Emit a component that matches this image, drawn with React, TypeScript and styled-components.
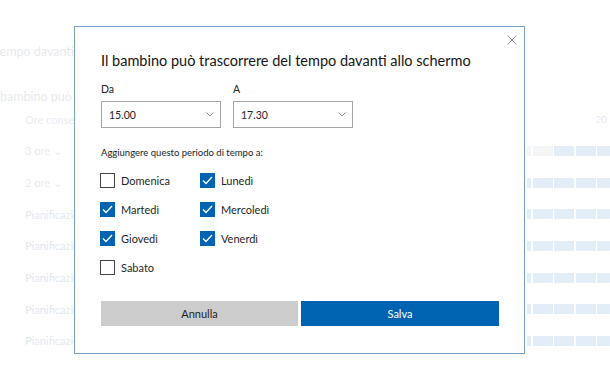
import React from 'react';
import styled, { createGlobalStyle } from 'styled-components';

const GlobalStyle = createGlobalStyle`
  html, body {
    margin: 0;
    padding: 0;
    background: #ffffff;
    font-family: Lato, 'Open Sans', Arial, sans-serif;
  }
  * { box-sizing: border-box; }
`;

const Page = styled.div`
  position: relative;
  width: 610px;
  height: 376px;
  overflow: hidden;
  background: #ffffff;
  padding-top: 42px;
  display: flex;
  flex-direction: column;
`;

const PageHeading = styled.div`
  width: 74px;
  overflow: hidden;
  font-size: 12.5px;
  line-height: 20px;
  color: #e7eaee;
  white-space: nowrap;
  direction: rtl;
  text-align: left;
`;

const PageSubHeading = styled.div`
  width: 74px;
  overflow: hidden;
  margin-top: 25px;
  font-size: 12.5px;
  line-height: 20px;
  color: #e7eaee;
  white-space: nowrap;
`;

const TableHead = styled.div`
  display: flex;
  align-items: center;
  justify-content: space-between;
  height: 20px;
  margin-top: 2px;
  margin-bottom: 6px;
`;

const TableRow = styled.div`
  display: flex;
  align-items: center;
  justify-content: space-between;
  height: 31.7px;
`;

const RowLabel = styled.div<{ tone?: 'plain' | 'link' }>`
  width: 74px;
  overflow: hidden;
  padding-left: 25px;
  font-size: 11px;
  color: ${({ tone }) => (tone === 'link' ? '#e1e8f3' : '#e8ebef')};
  white-space: nowrap;
`;

const HourMark = styled.div`
  width: 83px;
  text-align: right;
  padding-right: 3px;
  font-size: 10px;
  color: #e6e8ec;
`;

const Bars = styled.div`
  width: 83px;
  height: 10px;
  display: flex;
  gap: 1.5px;
`;

const BarCell = styled.div<{ w?: number; muted?: boolean }>`
  ${({ w }) => (w ? `width: ${w}px;` : 'flex: 1;')}
  height: 100%;
  background: ${({ muted }) => (muted ? '#f4f5f7' : '#e3edf8')};
`;

const Dialog = styled.div`
  position: absolute;
  left: 74px;
  top: 26px;
  width: 451px;
  height: 328px;
  background: #ffffff;
  border: 1px solid #78a2c5;
  padding: 22px 25px 0 26px;
  display: flex;
  flex-direction: column;
  color: #1f1f1f;
`;

const CloseButton = styled.button`
  position: absolute;
  top: 8px;
  right: 7px;
  width: 10px;
  height: 10px;
  padding: 0;
  border: none;
  background: none;
  display: flex;
  align-items: center;
  justify-content: center;
`;

const Title = styled.h2`
  margin: 0;
  font-size: 14.5px;
  line-height: 24px;
  font-weight: 400;
  color: #141414;
  white-space: nowrap;
`;

const Fields = styled.div`
  display: flex;
  gap: 12px;
  margin-top: 8px;
`;

const Field = styled.div`
  display: flex;
  flex-direction: column;
  gap: 4px;
  width: 120px;
`;

const FieldLabel = styled.div`
  font-size: 10.5px;
  line-height: 16px;
  color: #222;
`;

const Select = styled.div`
  height: 27px;
  border: 1px solid #a4a4a4;
  display: flex;
  align-items: center;
  justify-content: space-between;
  padding: 0 6px 0 7px;
  font-size: 10.5px;
  color: #222;
`;

const SectionLabel = styled.div`
  margin-top: 17px;
  font-size: 9.5px;
  line-height: 16px;
  color: #222;
`;

const DayGrid = styled.div`
  margin-top: 5px;
  margin-left: -1px;
  display: grid;
  grid-template-columns: 100px 100px;
  grid-auto-rows: 29px;
`;

const DayItem = styled.label`
  display: flex;
  align-items: center;
  gap: 6px;
  font-size: 11px;
  color: #1f1f1f;
`;

const Box = styled.span<{ checked?: boolean }>`
  width: 15px;
  height: 15px;
  display: flex;
  align-items: center;
  justify-content: center;
  background: ${({ checked }) => (checked ? '#0063b1' : '#ffffff')};
  border: ${({ checked }) => (checked ? '1px solid #0063b1' : '1.5px solid #444')};
`;

const Actions = styled.div`
  margin-top: 19px;
  display: grid;
  grid-template-columns: 197px 198px;
  gap: 3px;
`;

const ActionButton = styled.button<{ primary?: boolean }>`
  height: 25px;
  border: none;
  padding: 0;
  font-family: inherit;
  font-size: 11px;
  color: ${({ primary }) => (primary ? '#ffffff' : '#1f1f1f')};
  background: ${({ primary }) => (primary ? '#0063b1' : '#cccccc')};
`;

const Chevron = () => (
  <svg width="8" height="5" viewBox="0 0 8 5">
    <path d="M0.5 0.5 L4 4 L7.5 0.5" fill="none" stroke="#8a8a8a" strokeWidth="1" />
  </svg>
);

const Check = () => (
  <svg width="11" height="9" viewBox="0 0 11 9">
    <path d="M1 4.5 L4 7.5 L10 1" fill="none" stroke="#ffffff" strokeWidth="1.4" />
  </svg>
);

const days = [
  { name: 'Domenica', checked: false },
  { name: 'Lunedì', checked: true },
  { name: 'Martedì', checked: true },
  { name: 'Mercoledì', checked: true },
  { name: 'Giovedì', checked: true },
  { name: 'Venerdì', checked: true },
  { name: 'Sabato', checked: false },
];

const rows = [
  { label: '3 ore ⌄', tone: 'plain' as const, muted: true },
  { label: '2 ore ⌄', tone: 'plain' as const },
  { label: 'Pianificazione', tone: 'link' as const },
  { label: 'Pianificazione', tone: 'link' as const },
  { label: 'Pianificazione', tone: 'link' as const },
  { label: 'Pianificazione', tone: 'link' as const },
  { label: 'Pianificazione', tone: 'link' as const },
];

export default function App() {
  return (
    <>
      <GlobalStyle />
      <Page>
        <PageHeading>
          <bdi>del tempo davanti</bdi>
        </PageHeading>
        <PageSubHeading>bambino può trascorrere</PageSubHeading>
        <TableHead>
          <RowLabel>Ore consentite</RowLabel>
          <HourMark>20</HourMark>
        </TableHead>
        {rows.map((r, i) => (
          <TableRow key={i}>
            <RowLabel tone={r.tone}>{r.label}</RowLabel>
            <Bars>
              <BarCell w={4} muted={r.muted} />
              <BarCell w={20} muted={r.muted} />
              <BarCell w={20} />
              <BarCell w={20} />
              <BarCell />
            </Bars>
          </TableRow>
        ))}

        <Dialog>
          <CloseButton aria-label="Chiudi">
            <svg width="10" height="10" viewBox="0 0 10 10">
              <path d="M0.5 0.5 L9.5 9.5 M9.5 0.5 L0.5 9.5" stroke="#8c8c8c" strokeWidth="1" />
            </svg>
          </CloseButton>
          <Title>Il bambino può trascorrere del tempo davanti allo schermo</Title>
          <Fields>
            <Field>
              <FieldLabel>Da</FieldLabel>
              <Select>
                15.00
                <Chevron />
              </Select>
            </Field>
            <Field>
              <FieldLabel>A</FieldLabel>
              <Select>
                17.30
                <Chevron />
              </Select>
            </Field>
          </Fields>
          <SectionLabel>Aggiungere questo periodo di tempo a:</SectionLabel>
          <DayGrid>
            {days.map((d) => (
              <DayItem key={d.name}>
                <Box checked={d.checked}>{d.checked && <Check />}</Box>
                {d.name}
              </DayItem>
            ))}
          </DayGrid>
          <Actions>
            <ActionButton>Annulla</ActionButton>
            <ActionButton primary>Salva</ActionButton>
          </Actions>
        </Dialog>
      </Page>
    </>
  );
}
